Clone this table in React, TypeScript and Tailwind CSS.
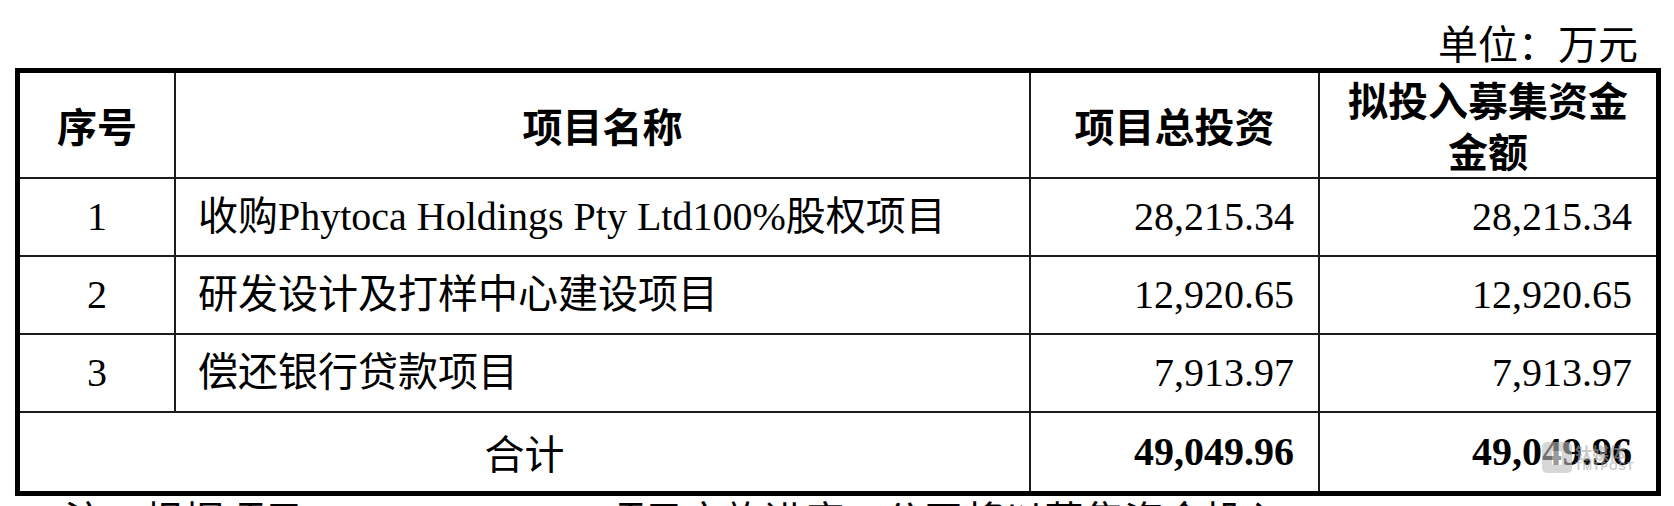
export default function App() {
  const rows = [
    { no: '1', name: '收购Phytoca Holdings Pty Ltd100%股权项目', total: '28,215.34', raise: '28,215.34' },
    { no: '2', name: '研发设计及打样中心建设项目', total: '12,920.65', raise: '12,920.65' },
    { no: '3', name: '偿还银行贷款项目', total: '7,913.97', raise: '7,913.97' },
  ];

  const cell = 'border-r-2 border-b-2 border-[#1c1c1c] flex items-center';

  return (
    <div className="w-[1674px] h-[506px] overflow-hidden bg-white text-black">
      {/* unit caption */}
      <div className="pt-[22px] pr-[36px] text-right text-[40px] leading-[40px] font-['Noto_Sans_CJK_SC',sans-serif]">
        单位：万元
      </div>

      <div className="relative mt-[6px] ml-[15px] w-[1646px] h-[428px] border-[5px] border-black">
        <div className="grid grid-cols-[156px_855px_289px_336px] grid-rows-[106px_78px_78px_78px_78px] text-[40px] font-['Liberation_Serif','Noto_Sans_CJK_SC',serif]">
          {/* header */}
          <div className={`${cell} justify-center font-bold font-['Noto_Sans_CJK_SC',sans-serif]`}>序号</div>
          <div className={`${cell} justify-center font-bold font-['Noto_Sans_CJK_SC',sans-serif]`}>项目名称</div>
          <div className={`${cell} justify-center font-bold font-['Noto_Sans_CJK_SC',sans-serif]`}>项目总投资</div>
          <div className="border-b-2 border-[#1c1c1c] flex items-center justify-center text-center leading-[51px] font-bold font-['Noto_Sans_CJK_SC',sans-serif]">
            <span>
              拟投入募集资金
              <br />
              金额
            </span>
          </div>

          {rows.map((r) => (
            <div key={r.no} className="contents">
              <div className={`${cell} justify-center`}>{r.no}</div>
              <div className={`${cell} pl-[22px]`}>{r.name}</div>
              <div className={`${cell} justify-end pr-[24px]`}>{r.total}</div>
              <div className="border-b-2 border-[#1c1c1c] flex items-center justify-end pr-[24px]">{r.raise}</div>
            </div>
          ))}

          {/* total */}
          <div className="col-span-2 border-r-2 border-[#1c1c1c] flex items-center justify-center font-['Noto_Sans_CJK_SC',sans-serif]">
            合计
          </div>
          <div className="border-r-2 border-[#1c1c1c] flex items-center justify-end pr-[24px] font-bold">49,049.96</div>
          <div className="relative flex items-center justify-end pr-[24px] font-bold">
            49,049.96
            {/* watermark */}
            <div className="absolute left-[222px] top-[29px] flex items-center gap-[3px] opacity-60">
              <div className="w-[30px] h-[31px] rounded-[5px] bg-[#bdbdbd] flex items-center justify-center">
                <div className="w-[10px] h-[14px] bg-white rounded-[2px]" />
              </div>
              <div className="flex flex-col leading-none">
                <span className="text-[17px] text-[#a8a8a8] font-['Noto_Sans_CJK_SC',sans-serif]">钛媒体</span>
                <span className="text-[11px] text-[#a8a8a8] font-['Liberation_Sans',sans-serif] tracking-[1px]">TMTPOST</span>
              </div>
            </div>
          </div>
        </div>
      </div>

      {/* note line, cut off by the viewport */}
      <div className="mt-[2px] flex text-[40px] leading-[40px] font-['Noto_Sans_CJK_SC',sans-serif]">
        <span className="pl-[64px]">注：根据项目</span>
        <span className="pl-[300px]">项目实施进度，公司将以募集资金投入</span>
      </div>
    </div>
  );
}
